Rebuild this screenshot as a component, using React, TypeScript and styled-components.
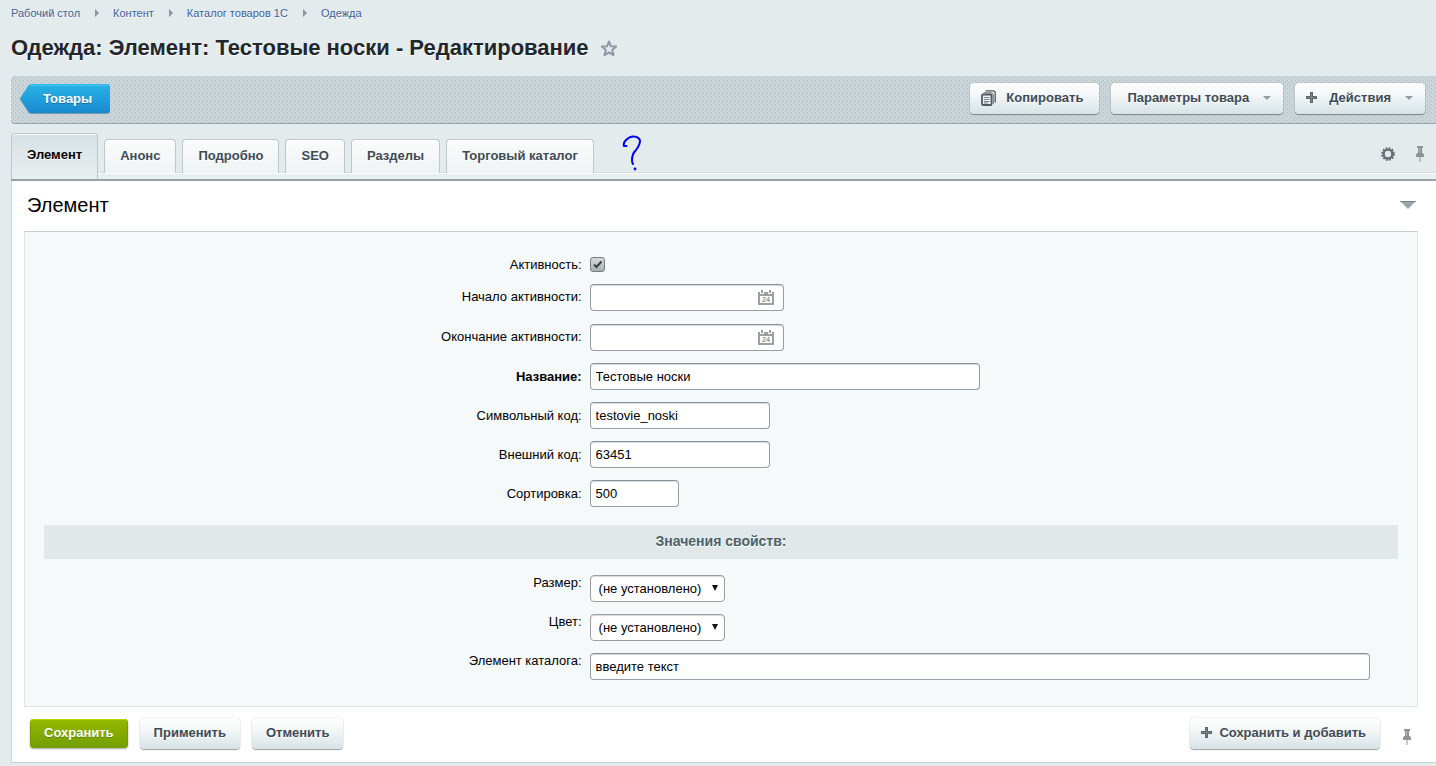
import React from 'react';
import styled, { createGlobalStyle, css } from 'styled-components';

const sans = '"Liberation Sans", Arial, sans-serif';

const GlobalStyle = createGlobalStyle`
  *, *::before, *::after { box-sizing: border-box; }
  body {
    margin: 0;
    background: #e3ebed;
    color: #000;
    font: 13px/15px ${sans};
  }
  button, input, select { font: inherit; color: inherit; margin: 0; }
`;

const Page = styled.div`
  padding-left: 11px;
  overflow: hidden;
`;

const Breadcrumbs = styled.nav`
  display: flex;
  align-items: center;
  height: 26px;
  font-size: 11px;
  text-shadow: 0 1px 0 #f8fbfb;
`;

const Crumb = styled.a`
  color: #3f5f96;
  text-decoration: none;
`;

const CrumbArrow = styled.svg`
  margin: 0 14px 0 15px;
`;

const TitleRow = styled.header`
  display: flex;
  align-items: center;
  gap: 11px;
  height: 50px;
  padding-bottom: 6px;
`;

const Title = styled.h1`
  margin: 0;
  font-size: 22px;
  line-height: 26px;
  font-weight: bold;
  color: #22272b;
  text-shadow: 0 1px 0 #fff;
`;

const IconButton = styled.button`
  display: flex;
  padding: 0;
  border: 0;
  background: none;
  cursor: pointer;
`;

const Toolbar = styled.div`
  display: flex;
  align-items: flex-end;
  gap: 12px;
  height: 48px;
  padding: 0 11px 9px 9px;
  border-bottom: 1px solid #9aa5a8;
  border-radius: 4px 0 0 4px;
  background: #cbd6da
    url("data:image/svg+xml,%3Csvg xmlns='http://www.w3.org/2000/svg' width='4' height='4'%3E%3Cpath d='M0 0h1v1H0zM2 2h1v1H2z' fill='%23abb8bc'/%3E%3C/svg%3E");
`;

const BackButton = styled.a`
  position: relative;
  display: flex;
  align-items: center;
  height: 30px;
  margin-right: auto;
  padding: 0 18px 2px 23px;
  color: #fff;
  font-weight: bold;
  text-decoration: none;
  text-shadow: 0 1px 0 #1272a5;
  isolation: isolate;
`;

const BackShape = styled.svg`
  position: absolute;
  inset: 0;
  width: 100%;
  height: 100%;
  z-index: -1;
`;

const green = css`
  height: 29px;
  color: #fff;
  text-shadow: 0 1px 0 #5f8200;
  background: linear-gradient(#96b800, #729e00);
  box-shadow: inset 0 1px 0 #b9d500, inset 0 0 0 1px #7b9c00, 0 1px 2px rgba(0, 0, 0, 0.35);
`;

const Button = styled.button<{ $primary?: boolean; $pad?: string }>`
  display: flex;
  align-items: center;
  height: 31px;
  padding: ${(p) => p.$pad ?? '0 14px 2px'};
  border: 0;
  border-radius: 4px;
  color: #3f4b54;
  font-weight: bold;
  white-space: nowrap;
  text-shadow: 0 1px 0 #fff;
  background: linear-gradient(#fff, #f5f8f9 35%, #d7e3e7);
  box-shadow: 0 0 1px rgba(0, 0, 0, 0.4), 0 1px 1px rgba(0, 0, 0, 0.35);
  cursor: pointer;
  ${(p) => p.$primary && green}
`;

const ButtonIcon = styled.svg<{ $gap: number }>`
  margin-right: ${(p) => p.$gap}px;
`;

const Caret = styled.svg`
  margin-left: 14px;
`;

const TabBar = styled.div`
  display: flex;
  align-items: flex-start;
  height: 57px;
  padding-top: 9px;
  border-bottom: 2px solid #98a2a5;
  background: linear-gradient(#d3dcdf, #d3dcdf) 0 48px / 100% 1px no-repeat,
    linear-gradient(#fff, #fff) 0 49px / 100% 1px no-repeat,
    linear-gradient(#e8eff1, #e8eff1) 0 50px / 100% 5px no-repeat;
`;

const Tab = styled.button<{ $active?: boolean }>`
  height: 34px;
  margin: 6px 6px 0 0;
  padding: 0 15px 2px;
  border: 1px solid #bcc8cc;
  border-bottom: 0;
  border-radius: 4px 4px 0 0;
  background: linear-gradient(#fbfcfc, #eff3f4);
  box-shadow: inset 0 1px 0 #fff;
  color: #3f4b54;
  font-weight: bold;
  white-space: nowrap;
  text-shadow: 0 1px 0 #fff;
  cursor: pointer;
  ${(p) =>
    p.$active &&
    css`
      height: 46px;
      margin-top: 0;
      padding-bottom: 4px;
      color: #000;
      background: linear-gradient(#d6e0e2, #e8eff1);
    `}
`;

const Scribble = styled.svg`
  margin: 1px auto 0 22px;
`;

const TabTools = styled.div`
  display: flex;
  align-items: center;
  gap: 20px;
  height: 42px;
  padding-right: 11px;
`;

const Panel = styled.main`
  border-left: 1px solid #c9d4d7;
  border-bottom: 1px solid #c9d4d7;
  margin-bottom: 3px;
  background: #fff;
`;

const PanelHead = styled.div`
  display: flex;
  align-items: center;
  justify-content: space-between;
  height: 50px;
  padding: 0 20px 2px 15px;
`;

const PanelTitle = styled.h2`
  margin: 0;
  font-size: 20px;
  line-height: 24px;
  font-weight: normal;
`;

const FormBox = styled.div`
  margin: 0 18px 0 12px;
  padding: 19px 19px 20px;
  border: 1px solid #dce7ea;
  border-top-color: #c3cfd2;
  background: #f5f9fa;
`;

const Row = styled.div<{ $top?: boolean; $spaced?: boolean }>`
  display: grid;
  grid-template-columns: 40% 60%;
  align-items: ${(p) => (p.$top ? 'start' : 'center')};
  padding: 6px 0 ${(p) => (p.$spaced ? 7 : 6)}px;
`;

const Label = styled.label<{ $bold?: boolean }>`
  padding-right: 4px;
  text-align: right;
  font-weight: ${(p) => (p.$bold ? 'bold' : 'normal')};
`;

const Cell = styled.div`
  display: flex;
  align-items: center;
  padding-left: 4px;
`;

const field = css`
  height: 27px;
  border: 1px solid #959eaa;
  border-top-color: #87919c;
  border-radius: 4px;
  background: #fff;
  box-shadow: inset 0 1px 1px #d5dadd;
`;

const TextInput = styled.input<{ $width: number }>`
  ${field}
  width: ${(p) => p.$width}px;
  max-width: 100%;
  padding: 0 5px 1px;
`;

const DateField = styled.div`
  ${field}
  display: flex;
  align-items: center;
  width: 194px;
  padding-right: 9px;
`;

const DateLabel = styled(Label)`
  padding-bottom: 2px;
`;

const DateInput = styled.input`
  flex: 1;
  min-width: 0;
  padding: 0 5px;
  border: 0;
  background: none;
`;

const Checkbox = styled.input`
  appearance: none;
  width: 15px;
  height: 15px;
  border: 1px solid #767d81;
  border-radius: 3px;
  background: url("data:image/svg+xml,%3Csvg xmlns='http://www.w3.org/2000/svg' width='13' height='13'%3E%3Cpath d='M3 6.5 5.5 9 10.5 3.5' fill='none' stroke='%23394045' stroke-width='2'/%3E%3C/svg%3E")
      center no-repeat,
    linear-gradient(#d5dadc, #a9b0b3);
`;

const SelectWrap = styled.div`
  display: grid;
  align-items: center;
  width: 135px;
  & > * { grid-area: 1 / 1; }
`;

const Select = styled.select`
  ${field}
  appearance: none;
  width: 100%;
  padding: 0 20px 0 8px;
  border-color: #9b9fa3;
`;

const SelectArrow = styled.svg`
  justify-self: end;
  margin: 0 7px 2px 0;
  pointer-events: none;
`;

const SectionTitle = styled.h3`
  margin: 12px 0 10px;
  padding: 8px 0 10px;
  background: #e0e8ea;
  color: #4b6267;
  text-align: center;
  font-size: 14px;
  line-height: 16px;
  text-shadow: 0 1px 0 #fff;
`;

const Footer = styled.footer`
  display: flex;
  align-items: center;
  gap: 12px;
  height: 55px;
  padding: 0 24px 2px 18px;
`;

const FooterEnd = styled.div`
  display: flex;
  align-items: flex-end;
  gap: 22px;
  margin-left: auto;
`;

const FooterPin = styled(IconButton)`
  padding-bottom: 4px;
`;

const Pin = () => (
  <svg width="10" height="16" viewBox="0 0 10 16">
    <path d="M2 0h6v2H7v5h1l1 2v2H1V9l1-2h1V2H2z" fill="#8b949a" />
    <path d="M4.500 11h1v5h-1z" fill="#8b949a" />
    <path d="M4 2h1v5H4z" fill="#b3babd" />
  </svg>
);

const Plus = ({ gap }: { gap: number }) => (
  <ButtonIcon $gap={gap} width="11" height="11" viewBox="0 0 11 11">
    <path d="M4 0h3v4h4v3H7v4H4V7H0V4h4z" fill="#5a646b" />
    <path d="M5 1h1v4h4v1H6v4H5V6H1V5h4z" fill="#7b858b" />
  </ButtonIcon>
);

const CopyIcon = () => (
  <ButtonIcon $gap={10} width="15" height="16" viewBox="0 0 15 16">
    <path d="M4.500.800H12q2.200 0 2.200 2.200v9.500" fill="none" stroke="#4f595f" strokeWidth="1.300" />
    <path d="M2.500 2.800h7.500q2.200 0 2.200 2.200v9" fill="none" stroke="#5d676d" strokeWidth="1" />
    <rect x="1" y="4.500" width="9.500" height="10.500" rx="1" fill="#eef2f3" stroke="#4f595f" strokeWidth="1.800" />
    <path d="M3 7.500h5.500M3 9.500h5.500M3 11.500h5.500M3 13h4" stroke="#6b757b" strokeWidth=".9" />
  </ButtonIcon>
);

const DownCaret = () => (
  <Caret width="8" height="4" viewBox="0 0 8 4">
    <path d="M0 0h8L4 4z" fill="#949da1" />
  </Caret>
);

const Calendar = () => (
  <svg width="16" height="15" viewBox="0 0 16 15">
    <path d="M0 2h16v13H0zM2 6v7h12V6z" fill="#9a9fa3" fillRule="evenodd" />
    <path d="M2 0h4v4H2zM10 0h4v4h-4z" fill="#fff" />
    <path d="M3 0h2v3H3zM11 0h2v3h-2z" fill="#9a9fa3" />
    <text x="8" y="12" textAnchor="middle" fontFamily={sans} fontSize="7" fontWeight="bold" fill="#8e9498">
      24
    </text>
  </svg>
);

const Gear = () => (
  <svg width="14" height="14" viewBox="0 0 14 14">
    <circle cx="7" cy="7" r="6" fill="none" stroke="#656e73" strokeWidth="1.800" strokeDasharray="1.800 1.342" />
    <circle cx="7" cy="7" r="4.400" fill="none" stroke="#656e73" strokeWidth="2.400" />
  </svg>
);

const crumbs = ['Рабочий стол', 'Контент', 'Каталог товаров 1С', 'Одежда'];
const tabs = ['Элемент', 'Анонс', 'Подробно', 'SEO', 'Разделы', 'Торговый каталог'];

const TextRow = ({ id, label, value, width, bold, top }: {
  id: string; label: string; value: string; width: number; bold?: boolean; top?: boolean;
}) => (
  <Row $top={top}>
    <Label htmlFor={id} $bold={bold}>{label}</Label>
    <Cell><TextInput id={id} defaultValue={value} $width={width} /></Cell>
  </Row>
);

const DateRow = ({ id, label, spaced }: { id: string; label: string; spaced?: boolean }) => (
  <Row $spaced={spaced}>
    <DateLabel htmlFor={id}>{label}</DateLabel>
    <Cell>
      <DateField>
        <DateInput id={id} />
        <IconButton type="button" aria-label="Календарь"><Calendar /></IconButton>
      </DateField>
    </Cell>
  </Row>
);

const SelectRow = ({ id, label }: { id: string; label: string }) => (
  <Row $top>
    <Label htmlFor={id}>{label}</Label>
    <Cell>
      <SelectWrap>
        <Select id={id}><option>(не установлено)</option></Select>
        <SelectArrow width="6" height="6" viewBox="0 0 6 6"><path d="M0 0h6L3 6z" fill="#111" /></SelectArrow>
      </SelectWrap>
    </Cell>
  </Row>
);

export default function App() {
  return (
    <Page>
      <GlobalStyle />
      <Breadcrumbs>
        {crumbs.map((c, i) => (
          <React.Fragment key={c}>
            {i > 0 && (
              <CrumbArrow width="4" height="8" viewBox="0 0 4 8"><path d="M0 0l4 4-4 4z" fill="#8d979b" /></CrumbArrow>
            )}
            <Crumb href="#">{c}</Crumb>
          </React.Fragment>
        ))}
      </Breadcrumbs>
      <TitleRow>
        <Title>Одежда: Элемент: Тестовые носки - Редактирование</Title>
        <IconButton type="button" aria-label="В избранное">
          <svg width="18" height="18" viewBox="0 0 18 18">
            <path d="M9 2.500l2 4.800 5.200.300-4 3.400 1.300 5.100L9 13.400l-4.500 2.700 1.300-5.100-4-3.400L7 7.300z" fill="none" stroke="#8f99a5" strokeWidth="2" strokeLinejoin="round" />
          </svg>
        </IconButton>
      </TitleRow>
      <Toolbar>
        <BackButton href="#">
          <BackShape viewBox="0 0 90 30" preserveAspectRatio="none">
            <defs>
              <linearGradient id="back" x1="0" y1="0" x2="0" y2="1">
                <stop offset="0" stopColor="#27b3e6" />
                <stop offset="1" stopColor="#1a8ad0" />
              </linearGradient>
            </defs>
            <path d="M11 1h76q3 0 3 3v23q0 3-3 3H11q-2 0-3-2L0 15.500 8 3q1-2 3-2z" fill="#7e9aa6" />
            <path d="M11 0h76q3 0 3 3v23q0 3-3 3H11q-2 0-3-2L0 14.500 8 2q1-2 3-2z" fill="url(#back)" />
            <path d="M10 1.500h78" stroke="#4cc6f0" />
          </BackShape>
          Товары
        </BackButton>
        <Button type="button" $pad="0 16px 2px 11px"><CopyIcon />Копировать</Button>
        <Button type="button" $pad="0 12px 2px 16px">Параметры товара<DownCaret /></Button>
        <Button type="button" $pad="0 12px 2px 11px"><Plus gap={12} />Действия<DownCaret /></Button>
      </Toolbar>
      <TabBar>
        {tabs.map((t, i) => (
          <Tab key={t} type="button" $active={i === 0}>{t}</Tab>
        ))}
        <Scribble width="20" height="38" viewBox="0 0 20 38">
          <path d="M4.500 12H2Q1 9 4 6q4-4 8-3.500 5 .5 6 4Q18 11 14 16q-4 4-4 10 0 3 1 4" fill="none" stroke="#0000f5" strokeWidth="2" strokeLinecap="round" />
          <circle cx="13" cy="35" r="1.400" fill="#0000f5" />
        </Scribble>
        <TabTools>
          <IconButton type="button" aria-label="Настройки"><Gear /></IconButton>
          <IconButton type="button" aria-label="Закрепить панель"><Pin /></IconButton>
        </TabTools>
      </TabBar>
      <Panel>
        <PanelHead>
          <PanelTitle>Элемент</PanelTitle>
          <IconButton type="button" aria-label="Свернуть">
            <svg width="16" height="8" viewBox="0 0 16 8">
              <path d="M0 0h16L8 8z" fill="#9ba4a8" />
              <path d="M0 .5h16" stroke="#7c868a" />
            </svg>
          </IconButton>
        </PanelHead>
        <FormBox>
          <Row>
            <Label htmlFor="active">Активность:</Label>
            <Cell><Checkbox id="active" type="checkbox" defaultChecked /></Cell>
          </Row>
          <DateRow id="from" label="Начало активности:" spaced />
          <DateRow id="to" label="Окончание активности:" />
          <TextRow id="name" label="Название:" value="Тестовые носки" width={390} bold />
          <TextRow id="code" label="Символьный код:" value="testovie_noski" width={180} />
          <TextRow id="xml" label="Внешний код:" value="63451" width={180} />
          <TextRow id="sort" label="Сортировка:" value="500" width={89} />
          <SectionTitle>Значения свойств:</SectionTitle>
          <SelectRow id="size" label="Размер:" />
          <SelectRow id="color" label="Цвет:" />
          <TextRow id="element" label="Элемент каталога:" value="введите текст" width={780} top />
        </FormBox>
        <Footer>
          <Button type="button" $primary>Сохранить</Button>
          <Button type="button">Применить</Button>
          <Button type="button">Отменить</Button>
          <FooterEnd>
            <Button type="button" $pad="0 14px 2px 11px"><Plus gap={7} />Сохранить и добавить</Button>
            <FooterPin type="button" aria-label="Закрепить кнопки"><Pin /></FooterPin>
          </FooterEnd>
        </Footer>
      </Panel>
    </Page>
  );
}
